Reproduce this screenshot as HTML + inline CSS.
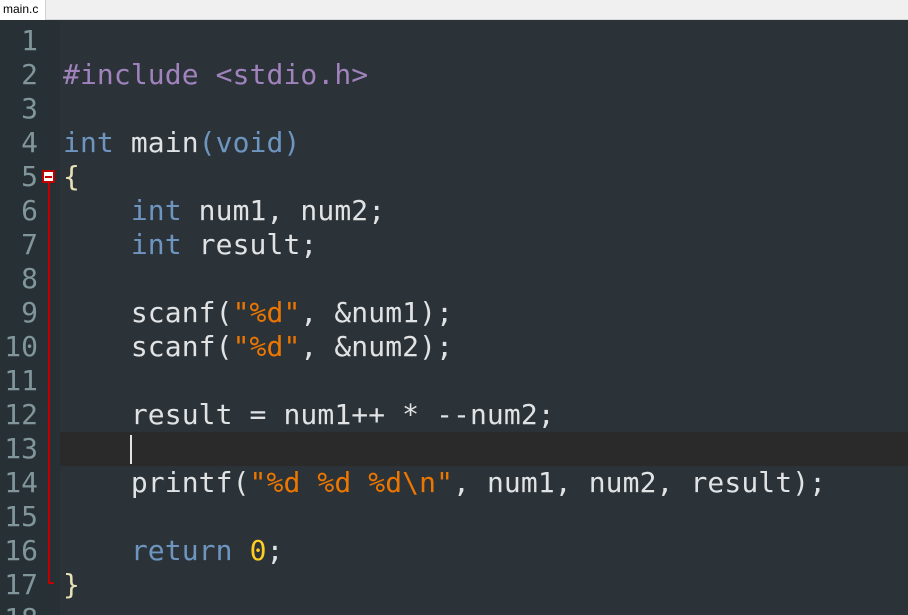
<!DOCTYPE html>
<html><head><meta charset="utf-8"><style>
html,body{margin:0;padding:0;width:908px;height:615px;overflow:hidden;background:#2b3338;}
#wrap{position:relative;width:908px;height:615px;overflow:hidden;background:#2b3338;}
#tabbar{position:absolute;left:0;top:0;width:908px;height:20px;background:#f0f0f0;border-bottom:1px solid #d8d8d8;box-sizing:border-box;}
#tab{position:absolute;left:0;top:0;width:46px;height:21px;background:#fff;border-right:1px solid #d0d0d0;font:12px "Liberation Sans",sans-serif;color:#000;line-height:19px;padding-left:3px;box-sizing:border-box;}
#gutter{position:absolute;left:0;top:20px;width:60px;height:595px;background:#263035;}
.ln{position:absolute;left:0;width:38px;text-align:right;font:28px "DejaVu Sans Mono",monospace;color:#81969a;line-height:34px;height:34px;}
.cl{position:absolute;left:63px;font:28px "DejaVu Sans Mono",monospace;color:#e0e2e4;line-height:34px;height:34px;white-space:pre;letter-spacing:0.1px;}
.k{color:#6e95c0}.s{color:#ec7600}.n{color:#ffcd22}.p{color:#a082bd}.b{color:#e8e2b7}
#hl{position:absolute;left:60px;top:432px;width:848px;height:34px;background:#2a2a2a;}
#cur{position:absolute;left:130px;top:435px;width:2px;height:29px;background:#e0e2e4;}
#fold{position:absolute;left:48px;top:182px;width:2px;height:402px;background:#c00000;}
#foldh{position:absolute;left:48px;top:582px;width:6px;height:2px;background:#c00000;}
#box{position:absolute;left:42px;top:170px;width:13px;height:13px;box-sizing:border-box;border:2px solid #c00000;background:#fff;}
#box:after{content:"";position:absolute;left:1px;top:3.5px;width:7px;height:2px;background:#c00000;}
</style></head><body><div id="wrap">
<div id="tabbar"><div id="tab">main.c</div></div>
<div id="gutter"></div>
<div id="hl"></div>
<div id="fold"></div><div id="foldh"></div><div id="box"></div>
<div class="ln" style="top:24px">1</div>
<div class="ln" style="top:58px">2</div>
<div class="ln" style="top:92px">3</div>
<div class="ln" style="top:126px">4</div>
<div class="ln" style="top:160px">5</div>
<div class="ln" style="top:194px">6</div>
<div class="ln" style="top:228px">7</div>
<div class="ln" style="top:262px">8</div>
<div class="ln" style="top:296px">9</div>
<div class="ln" style="top:330px">10</div>
<div class="ln" style="top:364px">11</div>
<div class="ln" style="top:398px">12</div>
<div class="ln" style="top:432px">13</div>
<div class="ln" style="top:466px">14</div>
<div class="ln" style="top:500px">15</div>
<div class="ln" style="top:534px">16</div>
<div class="ln" style="top:568px">17</div>
<div class="ln" style="top:602px">18</div>
<div class="cl" style="top:58px"><span class="p">#include &lt;stdio.h&gt;</span></div>
<div class="cl" style="top:126px"><span class="k">int</span> main<span class="k">(void)</span></div>
<div class="cl" style="top:160px"><span class="b">{</span></div>
<div class="cl" style="top:194px">    <span class="k">int</span> num1, num2;</div>
<div class="cl" style="top:228px">    <span class="k">int</span> result;</div>
<div class="cl" style="top:296px">    scanf(<span class="s">"%d"</span>, &amp;num1);</div>
<div class="cl" style="top:330px">    scanf(<span class="s">"%d"</span>, &amp;num2);</div>
<div class="cl" style="top:398px">    result = num1++ * --num2;</div>
<div class="cl" style="top:466px">    printf(<span class="s">"%d %d %d\n"</span>, num1, num2, result);</div>
<div class="cl" style="top:534px">    <span class="k">return</span> <span class="n">0</span>;</div>
<div class="cl" style="top:568px"><span class="b">}</span></div>
<div id="cur"></div>
</div></body></html>
